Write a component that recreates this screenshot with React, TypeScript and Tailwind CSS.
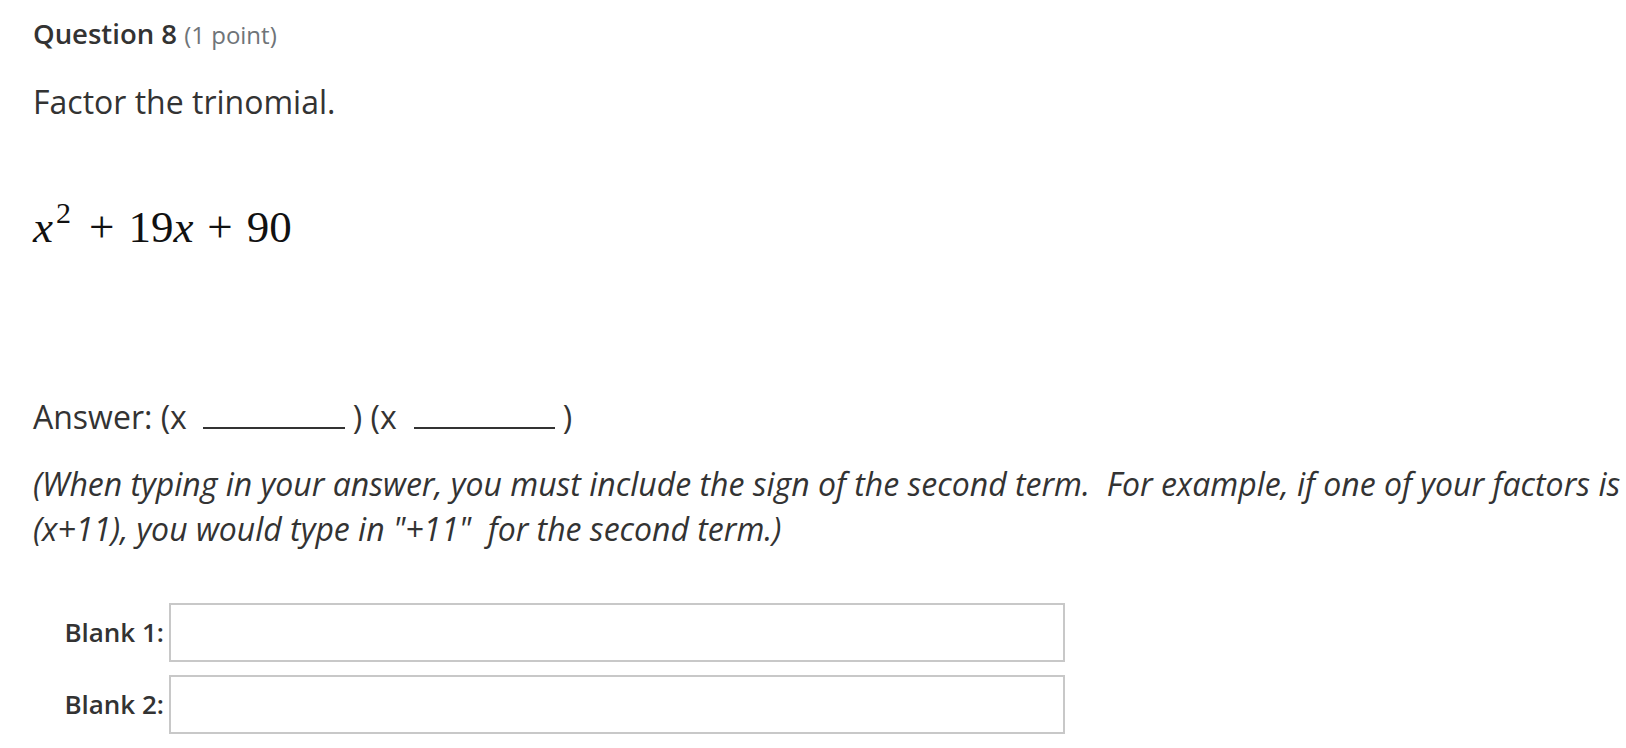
export default function App() {
  return (
    <div className="min-h-screen bg-white pl-[33px] pt-[17px] text-[#333333] [font-family:'Open_Sans',sans-serif]">
      <h3 className="text-[27.5px] leading-[34px] font-semibold text-[#333333]">
        Question 8 <span className="text-[24px] font-normal text-[#6f7478]">(1 point)</span>
      </h3>
      <p className="mt-[30px] text-[32px] leading-[40px]">Factor the trinomial.</p>
      <div className="mt-[77px] flex h-[56px] items-baseline text-[45px] leading-[56px] [font-family:'Liberation_Serif',serif] text-[#111]">
        <span className="italic">x</span>
        <span className="relative -top-[19px] ml-[3px] text-[30px] leading-none">2</span>
        <span className="ml-[18px] mr-[14px]">+</span>
        <span>19</span>
        <span className="italic">x</span>
        <span className="ml-[14px] mr-[14px]">+</span>
        <span>90</span>
      </div>
      <p className="mt-[140px] flex h-[44px] items-baseline text-[32px] leading-[44px]">
        <span>Answer: (x</span>
        <span className="ml-[16px] inline-block w-[142px] border-b-2 border-[#333333]"></span>
        <span className="ml-[8px]">) (x</span>
        <span className="ml-[17px] inline-block w-[141px] border-b-2 border-[#333333]"></span>
        <span className="ml-[8px]">)</span>
      </p>
      <p className="mt-[22px] text-[32px] leading-[45px] italic">
        (When typing in your answer, you must include the sign of the second term.{"\u00a0"} For example, if one of your factors is
        <br />
        (x+11), you would type in "+11"{"\u00a0"} for the second term.)
      </p>
      <div className="mt-[52px] flex flex-col gap-[13px]">
        <div className="flex items-center">
          <label className="w-[136px] pr-[5px] text-right text-[26px] font-semibold">Blank 1:</label>
          <input className="h-[59px] w-[896px] border-2 border-[#c8c8c8] bg-white" />
        </div>
        <div className="flex items-center">
          <label className="w-[136px] pr-[5px] text-right text-[26px] font-semibold">Blank 2:</label>
          <input className="h-[59px] w-[896px] border-2 border-[#c8c8c8] bg-white" />
        </div>
      </div>
    </div>
  );
}
